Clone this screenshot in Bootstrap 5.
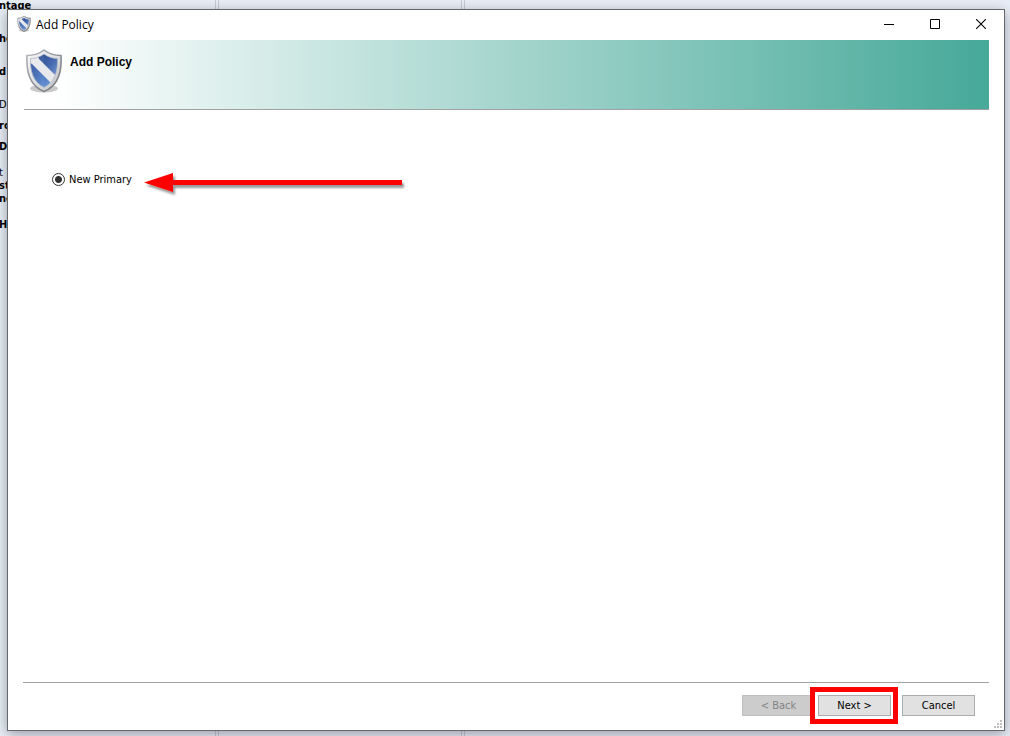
<!DOCTYPE html>
<html lang="en">
<head>
<meta charset="utf-8">
<meta name="viewport" content="width=device-width, initial-scale=1">
<title>Add Policy</title>
<link href="https://cdn.jsdelivr.net/npm/bootstrap@5.3.0/dist/css/bootstrap.min.css" rel="stylesheet">
<style>
  body { background: #e8eef7; font-family: "DejaVu Sans Condensed", sans-serif; font-size: 11px; line-height: 13px; color: #000; }
  .desk { padding: 9px 5px 5px 7px; }
  /* form labels and column rules of the window behind */
  .backdrop-form { inset: 0; }
  .backdrop-labels { width: 216px; margin-top: -1px; text-indent: -1px; border-right: 1px solid #c4cbd4; font-weight: 700; white-space: nowrap; }
  .backdrop-col { width: 244px; margin-left: 2px; border-left: 1px solid #c4cbd4; border-right: 1px solid #c4cbd4; }
  .backdrop-rest { margin-left: 2px; border-left: 1px solid #c4cbd4; }
  .gap-line { margin-top: 20px; }
  .gap-short { margin-top: 8px; }
  .gap-group { margin-top: 13px; }
  .wizard { border: 1px solid #66686d; box-shadow: 0 3px 12px rgba(0,0,0,.35); background: #fff; }
  .title-bar { height: 28px; margin-bottom: 2px; padding-left: 8px; font-family: "Open Sans", sans-serif; font-size: 12px; }
  .caption-btn { width: 46px; height: 28px; border: 0; background: none; padding: 0; }
  .caption-btn svg, .shield { display: block; }
  .shield { --rim-width: 1.6; }
  .title-bar .shield { --rim-width: 3; }
  .shield-rim { stroke-width: var(--rim-width); }
  .banner { margin: 0 15px 0 16px; height: 70px; padding: 9px 0 0 2px; border-bottom: 1px solid #a0a0a0; background: linear-gradient(90deg, #fff 0%, #fff 3%, #46a999 100%); }
  .banner h1 { font-family: "Liberation Sans", sans-serif; font-size: 12px; line-height: 16px; font-weight: 700; padding: 5px 0 0 8px; }
  .wizard-body { padding: 63px 44px 0; }
  .choice { appearance: none; width: 13px; height: 13px; border: 1px solid #333; border-radius: 50%; background: radial-gradient(circle, #333 0 3px, #fff 4px); }
  .choice-label { width: 79px; padding-left: 4px; }
  .wizard-footer { margin: 0 15px; padding: 12px 14px 14px; border-top: 1px solid #a0a0a0; }
  .wizard-btn { width: 73px; height: 21px; padding: 0; border: 1px solid #adadad; border-radius: 0; background: #e1e1e1; font-size: 11px; line-height: 13px; color: #000; }
  .wizard-btn:disabled { background: #ccc; border-color: #bfbfbf; color: #838383; }
  .next-slot { margin: 0 11px 0 3px; }
  .marker { inset: -8px -7px -8px -8px; border: 5px solid #f00; pointer-events: none; }
  .grip { right: 1px; bottom: 1px; }
</style>
</head>
<body>
<div class="desk position-relative vh-100 overflow-hidden d-flex">
  <div class="backdrop-form position-absolute d-flex overflow-hidden" aria-hidden="true">
    <div class="backdrop-labels flex-shrink-0">
      <div>ntage</div>
      <div class="gap-line">he</div>
      <div class="gap-line">d</div>
      <div class="gap-line fw-normal">D</div>
      <div class="gap-short">ro</div>
      <div class="gap-short">D</div>
      <div class="gap-group fw-normal">t</div>
      <div>st</div>
      <div>nc</div>
      <div class="gap-group">He</div>
    </div>
    <div class="backdrop-col flex-shrink-0"></div>
    <div class="backdrop-rest flex-grow-1"></div>
  </div>

  <svg width="0" height="0" class="position-absolute" aria-hidden="true">
    <defs>
      <linearGradient id="rim" x1="0" y1="0" x2="1" y2="1"><stop offset="0" stop-color="#b4b6bb"/><stop offset=".5" stop-color="#8f9199"/><stop offset="1" stop-color="#74767c"/></linearGradient>
      <linearGradient id="steel" x1="0" y1="0" x2="1" y2="1"><stop offset="0" stop-color="#fafafa"/><stop offset=".5" stop-color="#dfe1e4"/><stop offset="1" stop-color="#b9bcc1"/></linearGradient>
      <linearGradient id="blueTop" x1="0" y1="0" x2="1" y2="1"><stop offset="0" stop-color="#23458c"/><stop offset=".5" stop-color="#4467ad"/><stop offset="1" stop-color="#86a6da"/></linearGradient>
      <linearGradient id="blueLow" x1="0" y1="0" x2="1" y2="1"><stop offset="0" stop-color="#274b98"/><stop offset=".6" stop-color="#4a78c2"/><stop offset="1" stop-color="#7ba6e0"/></linearGradient>
      <clipPath id="field"><path d="M18 5C14 8 9 9.500 4.500 9.500C4 22 7 33 18 38.500C29 33 32 22 31.500 9.500C27 9.500 22 8 18 5Z"/></clipPath>
    </defs>
    <symbol id="shield" viewBox="0 0 36 44">
      <ellipse cx="18" cy="39.500" rx="14" ry="4" fill="#666" opacity=".35"/>
      <path class="shield-rim" d="M18 1C13 5 6 6.500 1 6.500C0 24 4 37 18 42.500C32 37 36 24 35 6.500C30 6.500 23 5 18 1Z" fill="url(#steel)" stroke="url(#rim)"/>
      <g clip-path="url(#field)">
        <path d="M0 0H36V44H0Z" fill="#e6e8ec"/>
        <path d="M12 7L18 3H34V30L28 25L13 10Z" fill="url(#blueTop)"/>
        <path d="M3 13L6 15L24 33V42H3Z" fill="url(#blueLow)"/>
        <path d="M18 1V42H0V1Z" fill="#fff" opacity=".08"/>
      </g>
      <path d="M18 5C14 8 9 9.500 4.500 9.500C4 22 7 33 18 38.500C29 33 32 22 31.500 9.500C27 9.500 22 8 18 5Z" fill="none" stroke="#b5b9c3" stroke-width=".8"/>
    </symbol>
  </svg>

  <main class="wizard position-relative flex-grow-1 d-flex flex-column">
    <div class="title-bar d-flex align-items-center">
      <svg class="shield me-1" width="16" height="16"><use href="#shield"/></svg>
      <span class="flex-grow-1">Add Policy</span>
      <div class="d-flex">
        <button class="caption-btn d-flex align-items-center justify-content-center" aria-label="Minimize"><svg width="10" height="10"><path d="M0 5.500H10" stroke="#000"/></svg></button>
        <button class="caption-btn d-flex align-items-center justify-content-center" aria-label="Maximize"><svg width="10" height="10"><path d="M.5.5H9.500V9.500H.5Z" fill="none" stroke="#000"/></svg></button>
        <button class="caption-btn d-flex align-items-center justify-content-center" aria-label="Close"><svg width="10" height="10"><path d="M0 0L10 10M10 0L0 10" stroke="#000" stroke-width="1.1"/></svg></button>
      </div>
    </div>

    <header class="banner d-flex align-items-start">
      <svg class="shield" width="36" height="44"><use href="#shield"/></svg>
      <h1 class="mb-0">Add Policy</h1>
    </header>

    <section class="wizard-body flex-grow-1 d-flex align-items-start">
      <div class="d-flex align-items-center">
        <input class="choice m-0" type="radio" name="policy" id="newPrimary" checked>
        <label class="choice-label text-nowrap" for="newPrimary">New Primary</label>
      </div>
      <svg width="264" height="24" aria-hidden="true">
        <defs><filter id="cast" x="-5%" y="-30%" width="110%" height="190%"><feDropShadow dx="2" dy="3" stdDeviation="1.200" flood-color="#000" flood-opacity=".4"/></filter></defs>
        <path d="M0 9.500L29 0V7H258V12H29V19Z" fill="#f00" filter="url(#cast)"/>
      </svg>
    </section>

    <footer class="wizard-footer d-flex justify-content-end">
      <button class="wizard-btn" disabled>&lt; Back</button>
      <div class="next-slot position-relative d-flex">
        <button class="wizard-btn">Next &gt;</button>
        <span class="marker position-absolute"></span>
      </div>
      <button class="wizard-btn">Cancel</button>
    </footer>
    <svg class="grip position-absolute" width="9" height="9" aria-hidden="true"><path d="M6 0h2v2h-2zM3 3h2v2h-2zM6 3h2v2h-2zM0 6h2v2h-2zM3 6h2v2h-2zM6 6h2v2h-2z" fill="#bfbfbf"/></svg>
  </main>
</div>
<script src="https://cdn.jsdelivr.net/npm/bootstrap@5.3.0/dist/js/bootstrap.bundle.min.js"></script>
</body>
</html>
